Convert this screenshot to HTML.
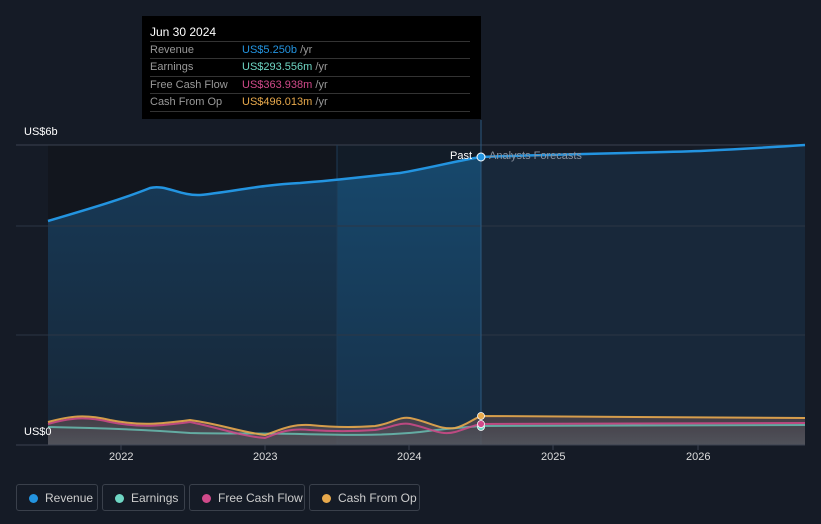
<!DOCTYPE html>
<html><head><style>
body{margin:0;width:821px;height:524px;background:#151b26;font-family:"Liberation Sans",sans-serif;overflow:hidden;position:relative}
.tt{position:absolute;left:142px;top:16px;width:339px;height:103px;background:#000;}
.tt .h{position:absolute;left:8px;top:9px;color:#fff;font-size:12px}
.row{position:absolute;left:8px;width:320px;border-top:1px solid #333;height:17px;font-size:11px;line-height:17px;color:#999}
.row span{position:absolute;left:92px}
.leg{position:absolute;top:484px;height:27px;border:1px solid #3a404b;border-radius:3px;color:#ccc;font-size:12px;line-height:27px;box-sizing:border-box}
.leg i{position:absolute;left:12px;top:9px;width:9px;height:9px;border-radius:50%}
.leg b{font-weight:normal;position:absolute;left:28px}
.ax{position:absolute;top:451px;color:#ddd;font-size:11px}
</style></head><body>
<svg width="821" height="524" style="position:absolute;left:0;top:0">
<defs>
<linearGradient id="g" x1="0" y1="0" x2="0" y2="1"><stop offset="0" stop-color="#173a58"/><stop offset="1" stop-color="#172636"/></linearGradient>
<linearGradient id="g2" x1="0" y1="0" x2="0" y2="1"><stop offset="0" stop-color="#17486c"/><stop offset="1" stop-color="#173048"/></linearGradient>
<linearGradient id="gr" x1="0" y1="0" x2="0" y2="1"><stop offset="0" stop-color="#4a4048"/><stop offset="1" stop-color="#5a5a60"/></linearGradient>
<clipPath id="c1"><rect x="48" y="0" width="289" height="524"/></clipPath>
<clipPath id="c2"><rect x="337" y="0" width="144" height="524"/></clipPath>
</defs>
<rect x="48" y="145" width="289" height="300" fill="#12161e"/>
<rect x="337" y="145" width="144" height="300" fill="#121c28"/>
<path d="M48,221 C85,210 120,200 150,188 C165,184 180,196 200,195 C230,192 260,185 300,183 C340,180 370,176 400,173 C430,168 460,160 481,157 L481,445 L48,445Z" fill="url(#g)" clip-path="url(#c1)"/>
<path d="M48,221 C85,210 120,200 150,188 C165,184 180,196 200,195 C230,192 260,185 300,183 C340,180 370,176 400,173 C430,168 460,160 481,157 L481,445 L48,445Z" fill="url(#g2)" clip-path="url(#c2)"/>
<path d="M481,157 C560,154 640,153 700,151 C760,148 805,145 805,145 L805,445 L481,445Z" fill="#18283a"/>
<line x1="16" y1="145" x2="805" y2="145" stroke="#3a4250"/>
<line x1="16" y1="226" x2="805" y2="226" stroke="#2c3644"/>
<line x1="16" y1="335" x2="805" y2="335" stroke="#2c3644"/>
<line x1="481" y1="120" x2="481" y2="445" stroke="#2c5a80"/>
<line x1="337" y1="145" x2="337" y2="445" stroke="#1d3a55"/>
<path d="M48,221 C85,210 120,200 150,188 C165,184 180,196 200,195 C230,192 260,185 300,183 C340,180 370,176 400,173 C430,168 460,160 481,157" fill="none" stroke="#2394e0" stroke-width="2.5"/>
<path d="M481,157 C560,154 640,153 700,151 C760,148 805,145 805,145" fill="none" stroke="#2394e0" stroke-width="2.5"/>
<path d="M48,422 C70,416 85,414 110,420 C140,426 160,424 190,420 C220,424 240,432 265,435 C280,430 290,424 310,425 C340,428 360,427 375,426 C390,424 400,416 410,418 C430,422 440,430 455,428 C465,426 475,418 481,416 L805,417 L805,445 L48,445Z" fill="url(#gr)" opacity=".85"/>
<path d="M48,427 C100,428 150,430 190,433 C230,434 260,433 300,434 C340,435 380,436 420,432 C450,428 470,427 481,426 L805,425" fill="none" stroke="#6fd6c4" stroke-width="2" opacity=".7"/>
<path d="M48,424 C70,418 85,416 110,422 C140,428 160,426 190,422 C220,428 240,436 265,438 C280,432 290,428 310,430 C340,432 360,431 375,430 C390,428 400,422 410,424 C430,428 440,436 455,432 C465,429 475,425 481,424 L805,423" fill="none" stroke="#d04a8a" stroke-width="2" opacity=".85"/>
<path d="M48,422 C70,416 85,414 110,420 C140,426 160,424 190,420 C220,424 240,432 265,435 C280,430 290,424 310,425 C340,428 360,427 375,426 C390,424 400,416 410,418 C430,422 440,430 455,428 C465,426 475,418 481,416 L805,418" fill="none" stroke="#e8a94c" stroke-width="2" opacity=".9"/>
<line x1="16" y1="445" x2="805" y2="445" stroke="#3a4250"/>
<g stroke="#3a4250"><line x1="121" y1="445" x2="121" y2="450"/><line x1="265" y1="445" x2="265" y2="450"/><line x1="409" y1="445" x2="409" y2="450"/><line x1="553" y1="445" x2="553" y2="450"/><line x1="698" y1="445" x2="698" y2="450"/></g>
<circle cx="481" cy="157" r="4" fill="#2394e0" stroke="#fff" stroke-width="1"/>
<circle cx="481" cy="427" r="3.5" fill="#6fd6c4" stroke="#fff" stroke-width=".8"/>
<circle cx="481" cy="424" r="3.5" fill="#d04a8a" stroke="#fff" stroke-width=".8"/>
<circle cx="481" cy="416" r="3.5" fill="#e8a94c" stroke="#fff" stroke-width=".8"/>
</svg>
<div style="position:absolute;left:24px;top:126px;color:#fff;font-size:11px">US$6b</div>
<div style="position:absolute;left:24px;top:426px;color:#fff;font-size:11px">US$0</div>
<div style="position:absolute;left:450px;top:150px;color:#fff;font-size:11px">Past</div>
<div style="position:absolute;left:489px;top:150px;color:#8a93a0;font-size:11px">Analysts Forecasts</div>
<div class="ax" style="left:109px">2022</div><div class="ax" style="left:253px">2023</div><div class="ax" style="left:397px">2024</div><div class="ax" style="left:541px">2025</div><div class="ax" style="left:686px">2026</div>
<div class="tt"><div class="h">Jun 30 2024</div>
<div class="row" style="top:25px">Revenue<span style="color:#2394e0">US$5.250b <em style="color:#999;font-style:normal">/yr</em></span></div>
<div class="row" style="top:42px">Earnings<span style="color:#6fd6c4">US$293.556m <em style="color:#999;font-style:normal">/yr</em></span></div>
<div class="row" style="top:60px">Free Cash Flow<span style="color:#d04a8a">US$363.938m <em style="color:#999;font-style:normal">/yr</em></span></div>
<div class="row" style="top:77px;border-bottom:1px solid #333">Cash From Op<span style="color:#e8a94c">US$496.013m <em style="color:#999;font-style:normal">/yr</em></span></div>
</div>
<div class="leg" style="left:16px;width:82px"><i style="background:#2394e0"></i><b>Revenue</b></div>
<div class="leg" style="left:102px;width:83px"><i style="background:#6fd6c4"></i><b>Earnings</b></div>
<div class="leg" style="left:189px;width:116px"><i style="background:#d04a8a"></i><b>Free Cash Flow</b></div>
<div class="leg" style="left:309px;width:111px"><i style="background:#e8a94c"></i><b>Cash From Op</b></div>
</body></html>
